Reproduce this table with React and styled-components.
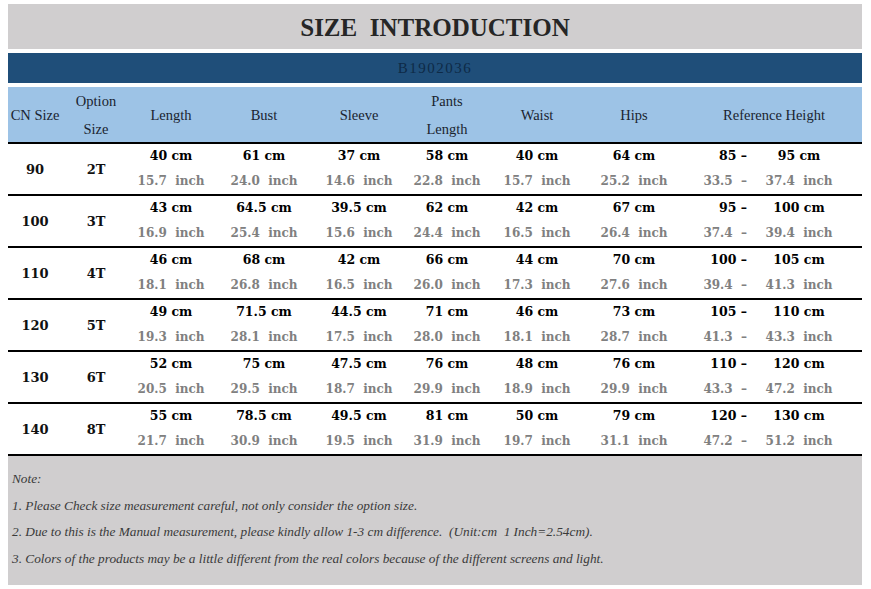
import React from "react";
import styled, { createGlobalStyle } from "styled-components";

const Global = createGlobalStyle`
  html, body { margin: 0; padding: 0; background: #ffffff; }
  body { font-family: "Liberation Serif", serif; }
`;

const COLS = "54px 68px 82px 104px 86px 90px 90px 104px 176px";

const Sheet = styled.div`
  width: 854px;
  margin-left: 8px;
  padding-top: 4px;
  display: flex;
  flex-direction: column;
`;

const TitleBar = styled.div`
  height: 45px;
  background: #d0cecf;
  display: flex;
  align-items: center;
  justify-content: center;
  font-family: "Liberation Serif", serif;
  font-weight: bold;
  font-size: 25px;
  color: #262626;
  white-space: pre;
  padding-top: 2px;
  box-sizing: border-box;
`;

const CodeBar = styled.div`
  margin-top: 4px;
  height: 30px;
  background: #1f4e79;
  display: flex;
  align-items: center;
  justify-content: center;
  font-family: "Liberation Serif", serif;
  font-size: 15px;
  letter-spacing: 1.5px;
  color: #0e2a47;
`;

const HeaderRow = styled.div`
  margin-top: 4px;
  height: 55px;
  background: #9dc3e6;
  border-bottom: 2px solid #000;
  display: grid;
  grid-template-columns: ${COLS};
`;

const HeadCell = styled.div`
  display: flex;
  flex-direction: column;
  align-items: center;
  justify-content: center;
  font-family: "Liberation Serif", serif;
  font-size: 14.5px;
  line-height: 28px;
  color: #1a2430;
  white-space: nowrap;
`;

const Row = styled.div`
  height: 50px;
  border-bottom: 2px solid #000;
  display: grid;
  grid-template-columns: ${COLS};
  font-family: "DejaVu Serif", serif;
  font-weight: bold;
`;

const KeyCell = styled.div`
  display: flex;
  align-items: center;
  justify-content: center;
  font-size: 13px;
  color: #111;
`;

const MeasureCell = styled.div`
  display: flex;
  flex-direction: column;
  align-items: center;
  white-space: pre;
`;

const Cm = styled.div`
  height: 24px;
  line-height: 24px;
  font-size: 12.5px;
  color: #000;
`;

const Inch = styled.div`
  height: 26px;
  line-height: 26px;
  font-size: 12px;
  color: #808080;
`;

const RangeCell = styled.div`
  display: grid;
  grid-template-columns: 66px 94px;
  grid-template-rows: 24px 26px;
  white-space: pre;
`;

const RangeFrom = styled.div`
  text-align: right;
  padding-right: 5px;
  font-size: ${(p) => (p.$inch ? "12px" : "12.5px")};
  line-height: ${(p) => (p.$inch ? "26px" : "24px")};
  color: ${(p) => (p.$inch ? "#808080" : "#000")};
`;

const RangeTo = styled.div`
  text-align: center;
  font-size: ${(p) => (p.$inch ? "12px" : "12.5px")};
  line-height: ${(p) => (p.$inch ? "26px" : "24px")};
  color: ${(p) => (p.$inch ? "#808080" : "#000")};
`;

const Notes = styled.div`
  height: 129px;
  background: #d0cecf;
  box-sizing: border-box;
  padding: 10px 0 0 4px;
  font-family: "Liberation Serif", serif;
  font-style: italic;
  font-size: 13.3px;
  line-height: 26.7px;
  color: #3a3a3a;
  white-space: pre;
`;

const headers = [
  ["CN Size"],
  ["Option", "Size"],
  ["Length"],
  ["Bust"],
  ["Sleeve"],
  ["Pants", "Length"],
  ["Waist"],
  ["Hips"],
  ["Reference Height"],
];

const rows = [
  ["90", "2T", [["40", "15.7"], ["61", "24.0"], ["37", "14.6"], ["58", "22.8"], ["40", "15.7"], ["64", "25.2"]], ["85", "95", "33.5", "37.4"]],
  ["100", "3T", [["43", "16.9"], ["64.5", "25.4"], ["39.5", "15.6"], ["62", "24.4"], ["42", "16.5"], ["67", "26.4"]], ["95", "100", "37.4", "39.4"]],
  ["110", "4T", [["46", "18.1"], ["68", "26.8"], ["42", "16.5"], ["66", "26.0"], ["44", "17.3"], ["70", "27.6"]], ["100", "105", "39.4", "41.3"]],
  ["120", "5T", [["49", "19.3"], ["71.5", "28.1"], ["44.5", "17.5"], ["71", "28.0"], ["46", "18.1"], ["73", "28.7"]], ["105", "110", "41.3", "43.3"]],
  ["130", "6T", [["52", "20.5"], ["75", "29.5"], ["47.5", "18.7"], ["76", "29.9"], ["48", "18.9"], ["76", "29.9"]], ["110", "120", "43.3", "47.2"]],
  ["140", "8T", [["55", "21.7"], ["78.5", "30.9"], ["49.5", "19.5"], ["81", "31.9"], ["50", "19.7"], ["79", "31.1"]], ["120", "130", "47.2", "51.2"]],
];

export default function App() {
  return (
    <>
      <Global />
      <Sheet>
        <TitleBar>{"SIZE  INTRODUCTION"}</TitleBar>
        <CodeBar>B1902036</CodeBar>
        <HeaderRow>
          {headers.map((h, i) => (
            <HeadCell key={i}>
              {h.map((t) => (
                <span key={t}>{t}</span>
              ))}
            </HeadCell>
          ))}
        </HeaderRow>
        {rows.map(([cn, opt, ms, rg]) => (
          <Row key={cn}>
            <KeyCell>{cn}</KeyCell>
            <KeyCell>{opt}</KeyCell>
            {ms.map(([cm, inch], i) => (
              <MeasureCell key={i}>
                <Cm>{`${cm} cm`}</Cm>
                <Inch>{`${inch}  inch`}</Inch>
              </MeasureCell>
            ))}
            <RangeCell>
              <RangeFrom>{`${rg[0]} –`}</RangeFrom>
              <RangeTo>{`${rg[1]} cm`}</RangeTo>
              <RangeFrom $inch>{`${rg[2]}  –`}</RangeFrom>
              <RangeTo $inch>{`${rg[3]}  inch`}</RangeTo>
            </RangeCell>
          </Row>
        ))}
        <Notes>
          <div>Note:</div>
          <div>1. Please Check size measurement careful, not only consider the option size.</div>
          <div>{"2. Due to this is the Manual measurement, please kindly allow 1-3 cm difference.  (Unit:cm  1 Inch=2.54cm)."}</div>
          <div>3. Colors of the products may be a little different from the real colors because of the different screens and light.</div>
        </Notes>
      </Sheet>
    </>
  );
}
